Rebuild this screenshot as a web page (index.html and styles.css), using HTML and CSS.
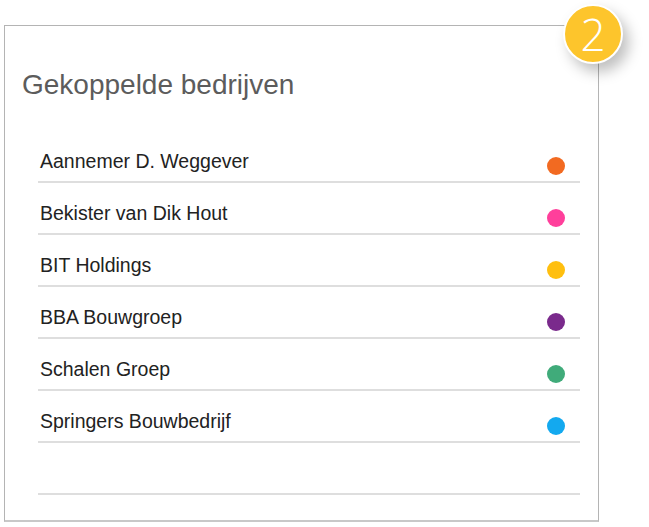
FILE: index.html
```html
<!DOCTYPE html>
<html lang="nl">
<head>
  <meta charset="UTF-8">
  <meta name="viewport" content="width=device-width, initial-scale=1.0">
  <title>Gekoppelde bedrijven</title>
  <link rel="stylesheet" href="styles.css">
</head>
<body>
  <div class="card">
    <div class="badge">2</div>
    <h2 class="title">Gekoppelde bedrijven</h2>

    <ul class="companies">
      <li class="company"><span>Aannemer D. Weggever</span><i class="dot orange"></i></li>
      <li class="company"><span>Bekister van Dik Hout</span><i class="dot pink"></i></li>
      <li class="company"><span>BIT Holdings</span><i class="dot yellow"></i></li>
      <li class="company"><span>BBA Bouwgroep</span><i class="dot purple"></i></li>
      <li class="company"><span>Schalen Groep</span><i class="dot green"></i></li>
      <li class="company"><span>Springers Bouwbedrijf</span><i class="dot blue"></i></li>
      <!-- lege rij -->
      <li class="company"></li>
    </ul>
  </div>
</body>
</html>
```

FILE: styles.css
```css
body {
  margin: 0;
  background-color: #fff;
  font-family: "Liberation Sans", Arial, sans-serif;
}

.card {
  position: relative;
  box-sizing: border-box;
  width: 595px;
  height: 497px;
  margin: 25px 0 0 4px;
  border: 1px solid #b4b4b4;
  border-bottom: 2px solid #c8c8c8;
  background-color: #fff;
}

.badge {
  position: absolute;
  top: -22px;
  right: -25px;
  width: 56px;
  height: 56px;
  border: 2px solid #fff;
  border-radius: 50%;
  background-color: #fdc52c;
  color: #fff;
  font-family: "Open Sans", sans-serif;
  font-weight: 300;
  font-size: 44px;
  line-height: 56px;
  text-align: center;
  box-shadow: 6px 8px 14px rgba(0, 0, 0, 0.25);
}

.title {
  margin: 44px 0 0 17px;
  font-size: 28px;
  line-height: 30px;
  font-weight: normal;
  color: #5c5c5c;
}

.companies {
  list-style: none;
  margin: 31px 18px 0 33px;
  padding: 0;
}

.company {
  display: flex;
  justify-content: space-between;
  align-items: center;
  height: 34px;
  padding: 16px 15px 0 2px;
  border-bottom: 2px solid #dedede;
  font-size: 19.5px;
  color: #222;
}

.company span {
  margin-bottom: 5px;
}

.dot {
  width: 18px;
  height: 18px;
  margin-top: 4px;
  border-radius: 50%;
}

.orange { background-color: #f26a21; }
.pink { background-color: #ff3f9b; }
.yellow { background-color: #ffbf0f; }
.purple { background-color: #7a2a8c; }
.green { background-color: #40ab7a; }
.blue { background-color: #13a9ef; }
```
